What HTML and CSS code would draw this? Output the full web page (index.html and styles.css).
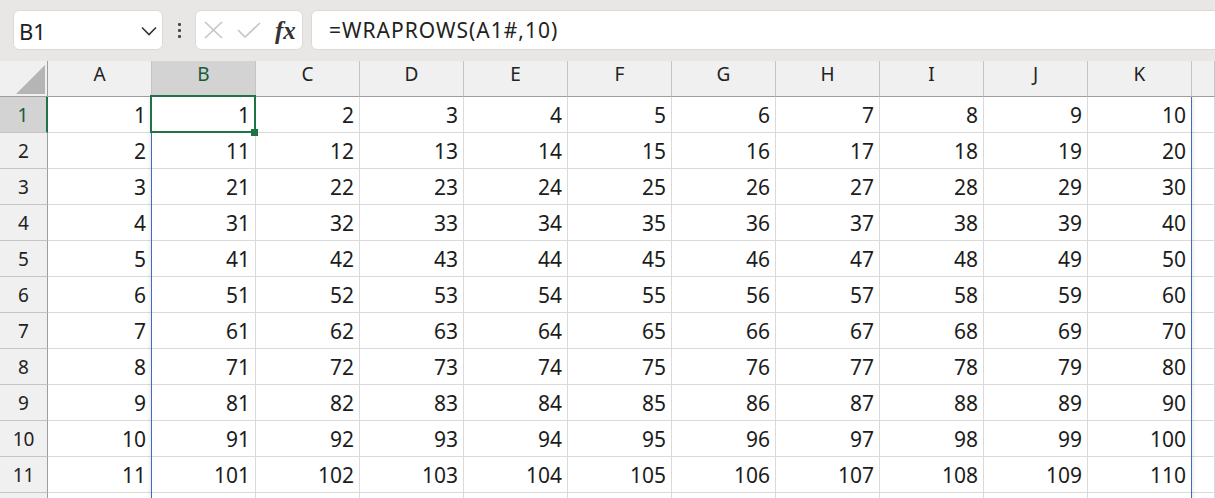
FILE: index.html
```html
<!DOCTYPE html>
<html lang="ja">
<head>
<meta charset="utf-8">
<title>WRAPROWS</title>
<link rel="stylesheet" href="styles.css">
</head>
<body>
<div class="app">
  <div class="fbar">
    <div class="namebox">
      <span class="nb-text">B1</span>
      <svg class="chev" width="16" height="10" viewBox="0 0 16 10"><polyline points="1,1.5 8,8.5 15,1.5" fill="none" stroke="#333" stroke-width="1.6"/></svg>
    </div>
    <div class="grip"><i></i><i></i><i></i></div>
    <div class="fxbox">
      <svg class="ico-x" width="19" height="18" viewBox="0 0 19 18"><path d="M1 1 L18 17 M18 1 L1 17" stroke="#c6c6c6" stroke-width="1.7" fill="none"/></svg>
      <svg class="ico-ok" width="24" height="16" viewBox="0 0 24 16"><polyline points="1,8 8,15 23,1" fill="none" stroke="#c6c6c6" stroke-width="1.7"/></svg>
      <span class="fx">fx</span>
    </div>
    <div class="formula">=WRAPROWS(A1#,10)</div>
  </div>

  <div class="sheet">
    <div class="grid">
      <div class="corner"><svg width="29" height="29" viewBox="0 0 29 29"><polygon points="0,29 29,0 29,29" fill="#b5b5b5"/></svg></div>
      <div class="ch">A</div><div class="ch sel-h">B</div><div class="ch">C</div><div class="ch">D</div><div class="ch">E</div><div class="ch">F</div><div class="ch">G</div><div class="ch">H</div><div class="ch">I</div><div class="ch">J</div><div class="ch">K</div><div class="ch"></div>

      <div class="rh sel-r">1</div><div class="c">1</div><div class="c">1</div><div class="c">2</div><div class="c">3</div><div class="c">4</div><div class="c">5</div><div class="c">6</div><div class="c">7</div><div class="c">8</div><div class="c">9</div><div class="c">10</div><div class="c"></div>
      <div class="rh">2</div><div class="c">2</div><div class="c">11</div><div class="c">12</div><div class="c">13</div><div class="c">14</div><div class="c">15</div><div class="c">16</div><div class="c">17</div><div class="c">18</div><div class="c">19</div><div class="c">20</div><div class="c"></div>
      <div class="rh">3</div><div class="c">3</div><div class="c">21</div><div class="c">22</div><div class="c">23</div><div class="c">24</div><div class="c">25</div><div class="c">26</div><div class="c">27</div><div class="c">28</div><div class="c">29</div><div class="c">30</div><div class="c"></div>
      <div class="rh">4</div><div class="c">4</div><div class="c">31</div><div class="c">32</div><div class="c">33</div><div class="c">34</div><div class="c">35</div><div class="c">36</div><div class="c">37</div><div class="c">38</div><div class="c">39</div><div class="c">40</div><div class="c"></div>
      <div class="rh">5</div><div class="c">5</div><div class="c">41</div><div class="c">42</div><div class="c">43</div><div class="c">44</div><div class="c">45</div><div class="c">46</div><div class="c">47</div><div class="c">48</div><div class="c">49</div><div class="c">50</div><div class="c"></div>
      <div class="rh">6</div><div class="c">6</div><div class="c">51</div><div class="c">52</div><div class="c">53</div><div class="c">54</div><div class="c">55</div><div class="c">56</div><div class="c">57</div><div class="c">58</div><div class="c">59</div><div class="c">60</div><div class="c"></div>
      <div class="rh">7</div><div class="c">7</div><div class="c">61</div><div class="c">62</div><div class="c">63</div><div class="c">64</div><div class="c">65</div><div class="c">66</div><div class="c">67</div><div class="c">68</div><div class="c">69</div><div class="c">70</div><div class="c"></div>
      <div class="rh">8</div><div class="c">8</div><div class="c">71</div><div class="c">72</div><div class="c">73</div><div class="c">74</div><div class="c">75</div><div class="c">76</div><div class="c">77</div><div class="c">78</div><div class="c">79</div><div class="c">80</div><div class="c"></div>
      <div class="rh">9</div><div class="c">9</div><div class="c">81</div><div class="c">82</div><div class="c">83</div><div class="c">84</div><div class="c">85</div><div class="c">86</div><div class="c">87</div><div class="c">88</div><div class="c">89</div><div class="c">90</div><div class="c"></div>
      <div class="rh">10</div><div class="c">10</div><div class="c">91</div><div class="c">92</div><div class="c">93</div><div class="c">94</div><div class="c">95</div><div class="c">96</div><div class="c">97</div><div class="c">98</div><div class="c">99</div><div class="c">100</div><div class="c"></div>
      <div class="rh">11</div><div class="c">11</div><div class="c">101</div><div class="c">102</div><div class="c">103</div><div class="c">104</div><div class="c">105</div><div class="c">106</div><div class="c">107</div><div class="c">108</div><div class="c">109</div><div class="c">110</div><div class="c"></div>
      <div class="rh"></div><div class="c"></div><div class="c"></div><div class="c"></div><div class="c"></div><div class="c"></div><div class="c"></div><div class="c"></div><div class="c"></div><div class="c"></div><div class="c"></div><div class="c"></div><div class="c"></div>
    </div>
    <div class="spill"></div>
    <div class="selection"></div>
    <div class="handle"></div>
  </div>
</div>
</body>
</html>
```

FILE: styles.css
```css
html, body {
  margin: 0;
  padding: 0;
}
body {
  width: 1215px;
  height: 498px;
  overflow: hidden;
  background: #ffffff;
  font-family: "Noto Sans", "Noto Sans CJK JP", sans-serif;
  color: #222;
}
.app {
  width: 1215px;
  height: 498px;
  overflow: hidden;
}

/* formula bar */
.fbar {
  height: 61px;
  box-sizing: border-box;
  background: #e9e7e5;
  display: flex;
  align-items: flex-start;
  padding: 10px 0 0 13px;
}
.namebox {
  width: 150px;
  height: 40px;
  box-sizing: border-box;
  background: #fff;
  border: 1px solid #dcdad8;
  border-radius: 6px;
  display: flex;
  align-items: center;
  justify-content: space-between;
  padding: 0 5px 0 5px;
  font-size: 22px;
  color: #222;
}
.nb-text {
  line-height: 1;
  padding-top: 2px;
}
.chev {
  display: block;
  margin-top: 1px;
}
.grip {
  width: 32px;
  height: 40px;
  display: flex;
  flex-direction: column;
  align-items: center;
  justify-content: center;
  gap: 3px;
}
.grip i {
  display: block;
  width: 3px;
  height: 3px;
  background: #4a4a4a;
  border-radius: 1px;
}
.fxbox {
  width: 108px;
  height: 40px;
  box-sizing: border-box;
  background: #fff;
  border: 1px solid #dcdad8;
  border-radius: 6px;
  display: flex;
  align-items: center;
  padding-left: 8px;
  margin-right: 8px;
}
.ico-x { display: block; }
.ico-ok { display: block; margin-left: 14px; }
.fx {
  margin-left: 14px;
  font-family: "Liberation Serif", "DejaVu Serif", serif;
  font-style: italic;
  font-weight: bold;
  font-size: 25px;
  color: #333;
  line-height: 1;
}
.formula {
  flex: 1;
  height: 40px;
  box-sizing: border-box;
  background: #fff;
  border: 1px solid #dcdad8;
  border-radius: 6px;
  margin-right: -20px;
  padding-left: 17px;
  display: flex;
  align-items: center;
  font-size: 21px;
  letter-spacing: 1px;
  color: #222;
}

/* sheet */
.sheet {
  position: relative;
  height: 437px;
  overflow: hidden;
}
.grid {
  display: grid;
  grid-template-columns: 48px repeat(11, 104px) 1fr;
  grid-template-rows: 36px repeat(12, 36px);
}
.corner, .ch, .rh {
  background: #f0f0f0;
  position: relative;
  z-index: 2;
  box-sizing: border-box;
}
.corner {
  border-right: 1px solid #9e9e9e;
  border-bottom: 1px solid #9e9e9e;
  display: flex;
  align-items: flex-start;
  padding: 4px 0 0 16px;
}
.corner svg { display: block; }
.ch {
  border-right: 1px solid #c4c4c4;
  border-bottom: 1px solid #9e9e9e;
  display: flex;
  align-items: center;
  justify-content: center;
  padding-bottom: 9px;
  font-size: 19px;
  color: #222;
}
.ch.sel-h {
  background: #d3d3d3;
  color: #185c37;
  border-bottom: 2px solid #217346;
  padding-bottom: 8px;
}
.rh {
  border-right: 1px solid #9e9e9e;
  border-bottom: 1px solid #c4c4c4;
  display: flex;
  align-items: center;
  justify-content: center;
  font-size: 19px;
  color: #222;
  z-index: 3;
}
.rh.sel-r {
  background: #d3d3d3;
  color: #185c37;
  border-right: 2px solid #217346;
}
.c {
  box-sizing: border-box;
  border-right: 1px solid #dadada;
  border-bottom: 1px solid #dadada;
  display: flex;
  align-items: center;
  justify-content: flex-end;
  padding-right: 5px;
  font-size: 21px;
  color: #1c1c1c;
  background: #fff;
}

/* overlays */
.spill {
  position: absolute;
  left: 151px;
  top: 35px;
  width: 1041px;
  height: 420px;
  box-sizing: border-box;
  border-left: 1px solid #3f6cc2;
  border-right: 1px solid #3f6cc2;
  box-shadow: 0 0 5px rgba(0, 0, 0, 0.14);
  z-index: 1;
}
.selection {
  position: absolute;
  left: 150px;
  top: 34px;
  width: 106px;
  height: 38px;
  box-sizing: border-box;
  border: 2px solid #217346;
  z-index: 4;
}
.handle {
  position: absolute;
  left: 251px;
  top: 68px;
  width: 7px;
  height: 7px;
  background: #217346;
  z-index: 5;
}
```
